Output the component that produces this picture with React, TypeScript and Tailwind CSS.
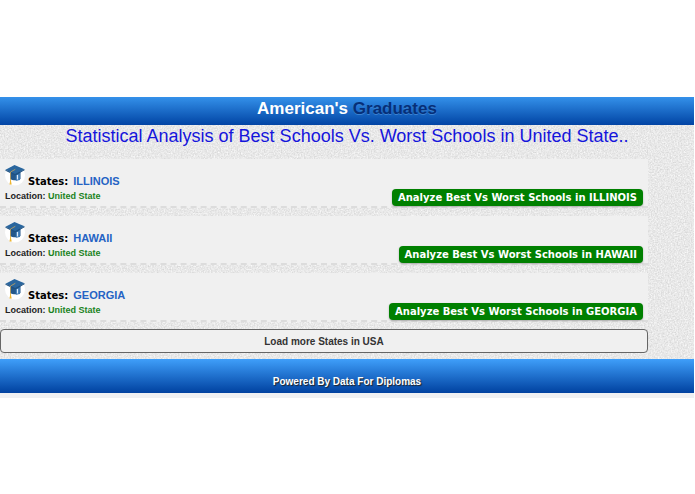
const states = ["ILLINOIS", "HAWAII", "GEORGIA"];

function GraduateIcon() {
  return (
    <svg className="h-[22px] w-5 shrink-0" viewBox="0 0 20 22" aria-hidden="true">
      <circle cx="10" cy="11.5" r="10" fill="#ffffff" />
      <path d="M5 8v7c2.5 1.8 8 1.8 10.5 0V8z" fill="#24578a" />
      <path d="M10.8 10.8 15 9v7l-4.2.8z" fill="#3c79b4" />
      <path d="M12.5 11v4.5" stroke="#dcebf8" strokeWidth="1.2" />
      <path d="M.5 5.8 9.5 1l10 4.2-9.3 5.5z" fill="#2a669e" />
      <path d="M.5 5.8 10.2 10l9.3-4.8v1L10.2 11.5.5 6.8z" fill="#1f5180" />
      <path d="M10.3 5.3 5.5 8v10" fill="none" stroke="#c9a45a" strokeWidth="0.8" />
      <path d="M5.5 14.5 4.5 20.5h2.2z" fill="#efb62f" />
    </svg>
  );
}

function PaperTexture() {
  return (
    <svg className="absolute inset-0 h-full w-full" aria-hidden="true">
      <filter id="paper" x="0" y="0" width="100%" height="100%" colorInterpolationFilters="sRGB">
        <feTurbulence type="fractalNoise" baseFrequency="0.7" numOctaves="2" seed="4" />
        <feColorMatrix values="0.2 0 0 0 0.81  0.2 0 0 0 0.81  0.2 0 0 0 0.81  0 0 0 0 1" />
      </filter>
      <rect width="100%" height="100%" filter="url(#paper)" />
    </svg>
  );
}

function StateCard({ name }: { name: string }) {
  return (
    <li className="flex h-[49px] items-end justify-between border-b-2 border-dashed border-[#dcdcdc] bg-[#f0f0f0] px-[5px]">
      <div className="pb-1">
        <div className="flex items-end gap-[3px]">
          <div className="pb-0.5">
            <GraduateIcon />
          </div>
          <h2 className="flex items-baseline gap-[5px] text-[11px] leading-3 font-bold">
            <span className="[font-family:'Comic_Sans_MS','DejaVu_Sans',sans-serif] text-[10px] text-black">States:</span>
            <a href={`#${name}`} className="text-[#2563c4]">{name}</a>
          </h2>
        </div>
        <p className="pt-0.5 text-[9px] leading-3 font-bold text-[#222]">
          Location: <span className="text-[#1b8222]">United State</span>
        </p>
      </div>
      <button
        type="button"
        className="h-[17px] rounded bg-[#008000] px-1.5 [font-family:Verdana,'DejaVu_Sans',sans-serif] text-[10px] leading-4 font-bold whitespace-nowrap text-white shadow-[0_1px_2px_#aaa]"
      >
        Analyze Best Vs Worst Schools in {name}
      </button>
    </li>
  );
}

export default function App() {
  return (
    <div className="bg-white py-[97px] pr-px [font-family:'Liberation_Sans',Arial,sans-serif]">
      <header className="flex h-7 justify-center bg-linear-to-b from-[#3491ea] to-[#0344a4]">
        <h1 className="text-[17px] leading-6 font-bold text-white">
          American's <span className="text-[#062f78] [text-shadow:0_1px_0_#3b83d2]">Graduates</span>
        </h1>
      </header>
      <main className="relative">
        <PaperTexture />
        <div className="relative pb-1.5">
          <p className="text-center text-[18px] leading-[22px] text-[#1515dc]">
            Statistical Analysis of Best Schools Vs. Worst Schools in United State..
          </p>
          <div className="pt-3 pr-[46px]">
            <ul className="flex flex-col gap-2">
              {states.map((name) => (
                <StateCard key={name} name={name} />
              ))}
            </ul>
            <button
              type="button"
              className="mt-[7px] block h-6 w-full rounded border border-[#666] bg-[#f0f0f0] text-[10px] font-bold text-[#333]"
            >
              Load more States in USA
            </button>
          </div>
        </div>
      </main>
      <footer className="border-b-[5px] border-[#eff0f3]">
        <p className="h-[34px] bg-linear-to-b from-[#3f9ffa] to-[#0241a0] pt-4 text-center text-[10px] leading-[14px] font-bold text-white [text-shadow:1px_1px_1px_#222]">
          Powered By Data For Diplomas
        </p>
      </footer>
    </div>
  );
}
